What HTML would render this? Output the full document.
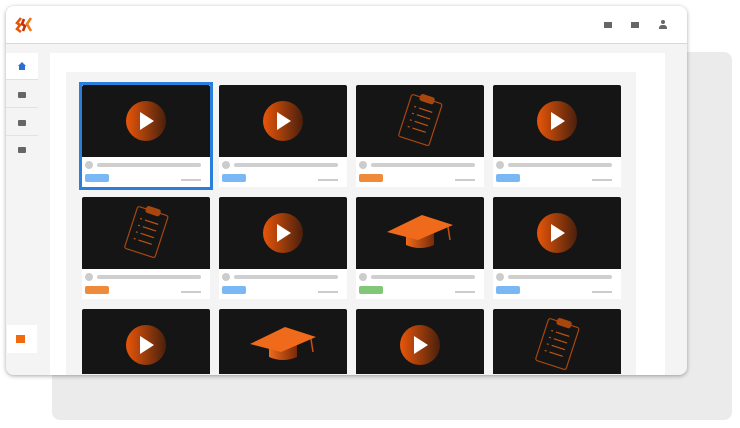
<!DOCTYPE html>
<html><head><style>
*{margin:0;padding:0;box-sizing:border-box}
body{width:740px;height:428px;background:#fff;position:relative;overflow:hidden;font-family:"Liberation Sans",sans-serif}
.back{position:absolute;left:52px;top:52px;width:680px;height:368px;background:#ebebeb;border-radius:8px}
.win{position:absolute;left:6px;top:6px;width:681px;height:369px;background:#f4f4f4;border-radius:8px;box-shadow:0 1px 4px rgba(0,0,0,.35);overflow:hidden}
.hdr{position:absolute;left:0;top:0;width:100%;height:38px;background:#fff;border-bottom:1px solid #d8d8d8}
.side{position:absolute;left:0;top:38px;width:32px;height:331px;background:#f4f4f4}
.si{position:absolute;left:0;width:32px;height:27px;border-bottom:1px solid #e2e2e2}
.si i{position:absolute;left:12px;top:11px;width:8px;height:6px;background:#666;border-radius:1px}
.main{position:absolute;background:#fff}
.inner{position:absolute;background:#f4f4f4}
.card{position:absolute;width:128px;height:102px;background:#fff}
.th{position:absolute;left:0;top:0;width:128px;height:72px;background:#151515;border-radius:2px 2px 0 0}
.dot{position:absolute;left:3px;top:76px;width:8px;height:8px;border-radius:50%;background:#ccc}
.ln{position:absolute;left:15px;top:78px;width:104px;height:4px;background:#cfcfcf;border-radius:2px}
.bd{position:absolute;left:3px;top:89px;width:24px;height:8px;border-radius:2px}
.sl{position:absolute;left:99px;top:94px;width:20px;height:2px;background:#ccc}
.sel{outline:3px solid #2a7fdd;outline-offset:0px}
.th svg{position:absolute;left:0;top:0}
</style></head><body>
<div class="back"></div>
<div class="win">
 <div class="hdr">
  <svg style="position:absolute;left:9px;top:10px" width="20" height="18" viewBox="0 0 20 18">
   <path d="M6 2 L2 7 L5 9 L2 13 L6 16" stroke="#e8560a" stroke-width="2.6" fill="none"/>
   <path d="M9 3 L7 8 L10 10 L8 15" stroke="#c8300a" stroke-width="2.6" fill="none"/>
   <path d="M16 2 L12 8 L16 15" stroke="#f07a1a" stroke-width="2.6" fill="none"/>
  </svg>
  <i style="position:absolute;left:598px;top:16px;width:8px;height:6px;background:#666"></i>
  <i style="position:absolute;left:625px;top:16px;width:8px;height:6px;background:#666"></i>
  <i style="position:absolute;left:655px;top:14px;width:4px;height:4px;border-radius:50%;background:#666"></i>
  <i style="position:absolute;left:653px;top:19px;width:8px;height:4px;border-radius:3px 3px 0 0;background:#666"></i>
 </div>
 <div class="side">
  <div class="si" style="top:9px;background:#fff;height:27px"><svg style="position:absolute;left:12px;top:9px" width="8" height="8" viewBox="0 0 8 8"><path d="M4 0 L8 4 L7 4 L7 8 L1 8 L1 4 L0 4Z" fill="#2a6fd6"/></svg></div>
  <div class="si" style="top:37px"><i></i></div>
  <div class="si" style="top:65px"><i></i></div>
  <div class="si" style="top:92px;border:none"><i></i></div>
  <div style="position:absolute;left:1px;top:281px;width:30px;height:28px;background:#fff"><i style="position:absolute;left:9px;top:10px;width:9px;height:8px;background:#f26a10"></i></div>
 </div>
</div>
<div class="main" style="left:50px;top:53px;width:615px;height:322px"></div>
<div class="inner" style="left:66px;top:72px;width:570px;height:303px"></div>
<svg width="0" height="0" style="position:absolute"><defs>
<linearGradient id="pg" x1="0" x2="1"><stop offset="0" stop-color="#e8560a"/><stop offset="1" stop-color="#4a200c"/></linearGradient>
<linearGradient id="cg" x1="0" x2="1"><stop offset="0" stop-color="#f06a1c"/><stop offset="1" stop-color="#7a2a08"/></linearGradient>
<symbol id="play" viewBox="0 0 128 72"><circle cx="64" cy="36" r="20" fill="url(#pg)"/><path d="M58 27 L72 36 L58 45Z" fill="#fff"/></symbol>
<symbol id="clip" viewBox="0 0 128 72"><g transform="rotate(18 64 36)" fill="none" stroke="#a8460f" stroke-width="1.2"><rect x="48" y="13" width="32" height="44" rx="2"/><rect x="57" y="10" width="14" height="6" rx="2" fill="#a8460f"/><g stroke="#c0530f" stroke-width="1.2"><path d="M54 24h2M59 24h14M54 31h2M59 31h14M54 38h2M59 38h14M54 45h2M59 45h14"/></g></g></symbol>
<symbol id="cap" viewBox="0 0 128 72"><path d="M50 33 Q64 34 78 32 L78 48 Q64 54 50 48Z" fill="url(#cg)"/><path d="M31 35 L66 18 L97 28 L62 43Z" fill="#f06a1c"/><path d="M92 30 L94 43" stroke="#c8500e" stroke-width="1.5"/></symbol>
</defs></svg>
<div id="g"></div>
<script>
var xs=[82,219,356,493],ys=[85,197,309];
var ic=[["play","play","clip","play"],["clip","play","cap","play"],["play","cap","play","clip"]];
var bc=[["#7ab8f5","#7ab8f5","#ee8a3a","#7ab8f5"],["#ee8a3a","#7ab8f5","#80c878","#7ab8f5"],["#7ab8f5","#7ab8f5","#7ab8f5","#7ab8f5"]];
var h="";
for(var r=0;r<3;r++)for(var c=0;c<4;c++){
h+='<div class="card'+(r==0&&c==0?' sel':'')+'" style="left:'+xs[c]+'px;top:'+ys[r]+'px;'+(r==2?'height:65px;overflow:hidden':'')+'"><div class="th"><svg width="128" height="72"><use href="#'+ic[r][c]+'"/></svg></div><div class="dot"></div><div class="ln"></div><div class="bd" style="background:'+bc[r][c]+'"></div><div class="sl"></div></div>';}
document.getElementById("g").innerHTML=h;
</script>
</body></html>
